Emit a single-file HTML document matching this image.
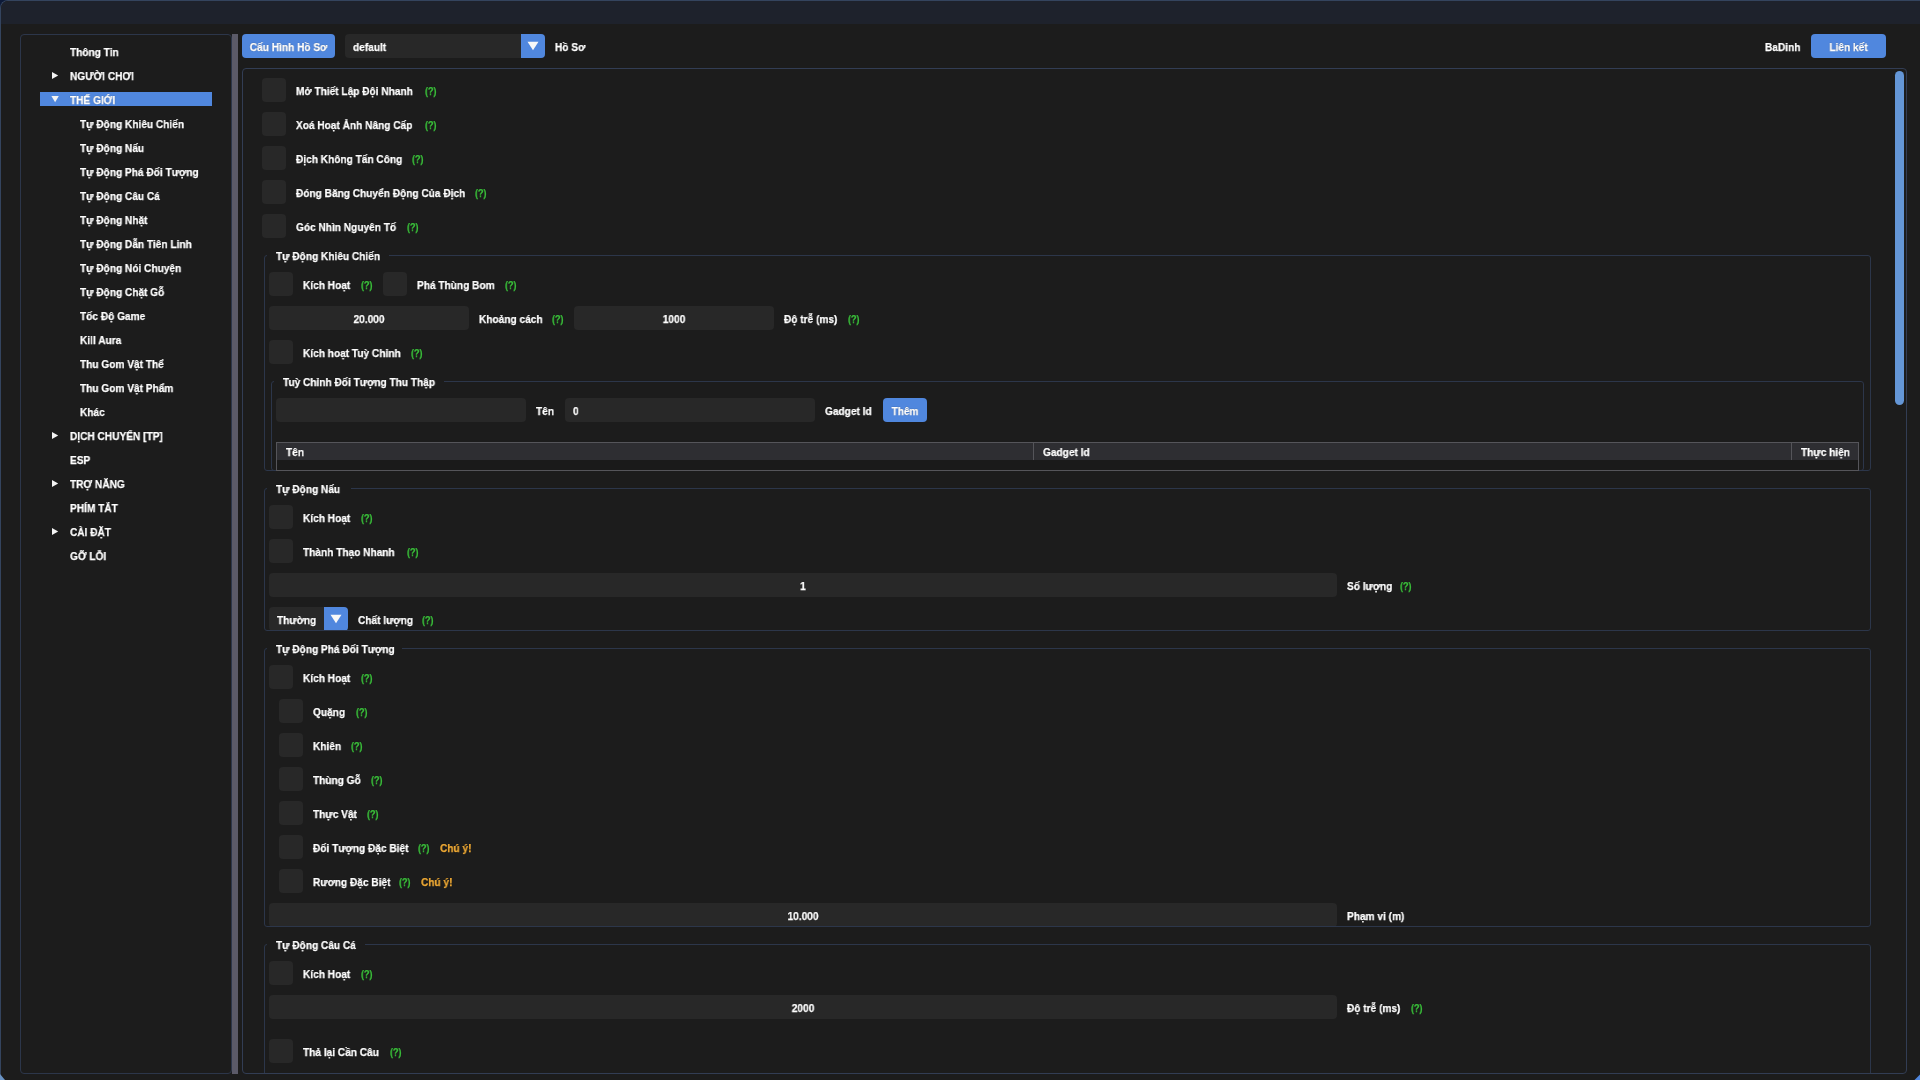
<!DOCTYPE html><html><head><meta charset="utf-8"><style>
html,body{margin:0;padding:0;background:#0d1a38;width:1920px;height:1080px;overflow:hidden}
.r{position:absolute}
.t{position:absolute;font-family:"Liberation Sans",sans-serif;font-weight:bold;font-size:11.5px;line-height:11.5px;color:#ffffff;white-space:nowrap;transform-origin:0 0;transform:scaleX(0.88);will-change:transform;-webkit-text-stroke-width:0.25px;text-shadow:0 0 1px rgba(0,0,0,.7)}
.t.c{text-align:center;transform-origin:50% 0}
.q{color:#3cc23c;transform:scaleX(.78)}
.w{color:#f2ac36}
.z5{z-index:6}
</style></head><body>
<div class="r" style="left:0px;top:0px;width:1920px;height:1080px;background:#1c1c1c;border-top-left-radius:8px;border-top:1px solid #34445e;border-left:1px solid #34445e;box-sizing:border-box"></div>
<div class="r" style="left:1px;top:1px;width:1919px;height:23px;background:#1e222c;border-top-left-radius:7px"></div>
<div class="r" style="left:20px;top:34px;width:212px;height:1040px;border:1px solid #2c364a;border-radius:4px;box-sizing:border-box"></div>
<div class="r" style="left:232px;top:34px;width:6px;height:1040px;background:#5b5a68"></div>
<div class="r" style="left:40px;top:92px;width:172px;height:14px;background:#5087de"></div>
<div class="t " style="left:70px;top:47.20px">Thông Tin</div>
<svg class="r" style="left:51px;top:70.5px" width="8" height="9"><path d="M1 1 L7.2 4.5 L1 8Z" fill="#f4f4f4"/></svg>
<div class="t " style="left:70px;top:71.20px">NGƯỜI CHƠI</div>
<svg class="r" style="left:51px;top:95px" width="9" height="8"><path d="M0.4 1 L7.8 1 L4.1 7.2Z" fill="#f4f4f4"/></svg>
<div class="t " style="left:70px;top:95.20px">THẾ GIỚI</div>
<div class="t " style="left:80px;top:119.20px">Tự Động Khiêu Chiến</div>
<div class="t " style="left:80px;top:143.20px">Tự Động Nấu</div>
<div class="t " style="left:80px;top:167.20px">Tự Động Phá Đối Tượng</div>
<div class="t " style="left:80px;top:191.20px">Tự Động Câu Cá</div>
<div class="t " style="left:80px;top:215.20px">Tự Động Nhặt</div>
<div class="t " style="left:80px;top:239.20px">Tự Động Dẫn Tiên Linh</div>
<div class="t " style="left:80px;top:263.20px">Tự Động Nói Chuyện</div>
<div class="t " style="left:80px;top:287.20px">Tự Động Chặt Gỗ</div>
<div class="t " style="left:80px;top:311.20px">Tốc Độ Game</div>
<div class="t " style="left:80px;top:335.20px">Kill Aura</div>
<div class="t " style="left:80px;top:359.20px">Thu Gom Vật Thể</div>
<div class="t " style="left:80px;top:383.20px">Thu Gom Vật Phẩm</div>
<div class="t " style="left:80px;top:407.20px">Khác</div>
<svg class="r" style="left:51px;top:430.5px" width="8" height="9"><path d="M1 1 L7.2 4.5 L1 8Z" fill="#f4f4f4"/></svg>
<div class="t " style="left:70px;top:431.20px">DỊCH CHUYỂN [TP]</div>
<div class="t " style="left:70px;top:455.20px">ESP</div>
<svg class="r" style="left:51px;top:478.5px" width="8" height="9"><path d="M1 1 L7.2 4.5 L1 8Z" fill="#f4f4f4"/></svg>
<div class="t " style="left:70px;top:479.20px">TRỢ NĂNG</div>
<div class="t " style="left:70px;top:503.20px">PHÍM TẮT</div>
<svg class="r" style="left:51px;top:526.5px" width="8" height="9"><path d="M1 1 L7.2 4.5 L1 8Z" fill="#f4f4f4"/></svg>
<div class="t " style="left:70px;top:527.20px">CÀI ĐẶT</div>
<div class="t " style="left:70px;top:551.20px">GỠ LỖI</div>
<div class="r" style="left:242px;top:34px;width:93px;height:24px;background:#5087de;border-radius:4px"></div>
<div class="t c " style="left:242px;width:93px;top:42.20px">Cấu Hình Hồ Sơ</div>
<div class="r" style="left:345px;top:34px;width:200px;height:24px;background:#282828;border-radius:4px"></div>
<div class="r" style="left:521px;top:34px;width:24px;height:24px;background:#5087de;border-radius:0 4px 4px 0"></div>
<svg class="r" style="left:527px;top:41px" width="12" height="10"><path d="M0.5 0.8 L11.5 0.8 L6 9.3Z" fill="#f8f8f8"/></svg>
<div class="t " style="left:353px;top:42.20px">default</div>
<div class="t " style="left:555px;top:42.20px">Hồ Sơ</div>
<div class="t " style="left:1765px;top:42.20px">BaDinh</div>
<div class="r" style="left:1811px;top:34px;width:75px;height:24px;background:#5087de;border-radius:4px"></div>
<div class="t c " style="left:1811px;width:75px;top:42.20px">Liên kết</div>
<div class="r" style="left:242px;top:68px;width:1665px;height:1006px;border:1px solid #323d54;border-radius:4px;box-sizing:border-box"></div>
<div class="r" style="left:243px;top:69px;width:1663px;height:1004px;overflow:hidden"><div class="r" style="left:-243px;top:-69px;width:1920px;height:1080px">
<div class="r" style="left:262px;top:78px;width:24px;height:24px;background:#282828;border-radius:4px"></div>
<div class="t " style="left:296px;top:86.20px">Mở Thiết Lập Đội Nhanh</div>
<div class="t q" style="left:425px;top:86.20px">(?)</div>
<div class="r" style="left:262px;top:112px;width:24px;height:24px;background:#282828;border-radius:4px"></div>
<div class="t " style="left:296px;top:120.20px">Xoá Hoạt Ảnh Nâng Cấp</div>
<div class="t q" style="left:425px;top:120.20px">(?)</div>
<div class="r" style="left:262px;top:146px;width:24px;height:24px;background:#282828;border-radius:4px"></div>
<div class="t " style="left:296px;top:154.20px">Địch Không Tấn Công</div>
<div class="t q" style="left:412px;top:154.20px">(?)</div>
<div class="r" style="left:262px;top:180px;width:24px;height:24px;background:#282828;border-radius:4px"></div>
<div class="t " style="left:296px;top:188.20px">Đóng Băng Chuyển Động Của Địch</div>
<div class="t q" style="left:475px;top:188.20px">(?)</div>
<div class="r" style="left:262px;top:214px;width:24px;height:24px;background:#282828;border-radius:4px"></div>
<div class="t " style="left:296px;top:222.20px">Góc Nhìn Nguyên Tố</div>
<div class="t q" style="left:407px;top:222.20px">(?)</div>
<div class="r" style="left:264px;top:255px;width:1607px;height:216px;border:1px solid #2c364a;border-radius:3px;box-sizing:border-box;z-index:2"></div>
<div class="r" style="left:267px;top:254px;width:122px;height:3px;background:#1c1c1c;z-index:3"></div>
<div class="t" style="left:276px;top:251.20px;z-index:4">Tự Động Khiêu Chiến</div>
<div class="r" style="left:269px;top:272px;width:24px;height:24px;background:#282828;border-radius:4px"></div>
<div class="t " style="left:303px;top:280.20px">Kích Hoạt</div>
<div class="t q" style="left:361px;top:280.20px">(?)</div>
<div class="r" style="left:383px;top:272px;width:24px;height:24px;background:#282828;border-radius:4px"></div>
<div class="t " style="left:417px;top:280.20px">Phá Thùng Bom</div>
<div class="t q" style="left:505px;top:280.20px">(?)</div>
<div class="r" style="left:269px;top:306px;width:200px;height:24px;background:#282828;border-radius:4px"></div>
<div class="t c " style="left:269px;width:200px;top:314.20px">20.000</div>
<div class="t " style="left:479px;top:314.20px">Khoảng cách</div>
<div class="t q" style="left:552px;top:314.20px">(?)</div>
<div class="r" style="left:574px;top:306px;width:200px;height:24px;background:#282828;border-radius:4px"></div>
<div class="t c " style="left:574px;width:200px;top:314.20px">1000</div>
<div class="t " style="left:784px;top:314.20px">Độ trễ (ms)</div>
<div class="t q" style="left:848px;top:314.20px">(?)</div>
<div class="r" style="left:269px;top:340px;width:24px;height:24px;background:#282828;border-radius:4px"></div>
<div class="t " style="left:303px;top:348.20px">Kích hoạt Tuỳ Chỉnh</div>
<div class="t q" style="left:411px;top:348.20px">(?)</div>
<div class="r" style="left:271px;top:381px;width:1593px;height:90px;border:1px solid #2c364a;border-radius:3px;box-sizing:border-box;z-index:2"></div>
<div class="r" style="left:274px;top:380px;width:170px;height:3px;background:#1c1c1c;z-index:3"></div>
<div class="t" style="left:283px;top:377.20px;z-index:4">Tuỳ Chỉnh Đối Tượng Thu Thập</div>
<div class="r" style="left:276px;top:398px;width:250px;height:24px;background:#282828;border-radius:4px"></div>
<div class="t " style="left:536px;top:406.20px">Tên</div>
<div class="r" style="left:565px;top:398px;width:250px;height:24px;background:#282828;border-radius:4px"></div>
<div class="t " style="left:573px;top:406.20px">0</div>
<div class="t " style="left:825px;top:406.20px">Gadget Id</div>
<div class="r" style="left:883px;top:398px;width:44px;height:24px;background:#5087de;border-radius:4px"></div>
<div class="t c " style="left:883px;width:44px;top:406.20px">Thêm</div>
<div class="r" style="left:276px;top:442px;width:1583px;height:29px;border:1px solid #55555a;box-sizing:border-box;background:#1a1a1a;z-index:5"></div>
<div class="r" style="left:277px;top:443px;width:1581px;height:17px;background:#2e2e32;z-index:5"></div>
<div class="r" style="left:1033px;top:443px;width:1px;height:17px;background:#55555a;z-index:5"></div>
<div class="r" style="left:1791px;top:443px;width:1px;height:17px;background:#55555a;z-index:5"></div>
<div class="t z5" style="left:286px;top:447.20px">Tên</div>
<div class="t z5" style="left:1043px;top:447.20px">Gadget Id</div>
<div class="t z5" style="left:1801px;top:447.20px">Thực hiện</div>
<div class="r" style="left:264px;top:488px;width:1607px;height:143px;border:1px solid #2c364a;border-radius:3px;box-sizing:border-box;z-index:2"></div>
<div class="r" style="left:267px;top:487px;width:84px;height:3px;background:#1c1c1c;z-index:3"></div>
<div class="t" style="left:276px;top:484.20px;z-index:4">Tự Động Nấu</div>
<div class="r" style="left:269px;top:505px;width:24px;height:24px;background:#282828;border-radius:4px"></div>
<div class="t " style="left:303px;top:513.20px">Kích Hoạt</div>
<div class="t q" style="left:361px;top:513.20px">(?)</div>
<div class="r" style="left:269px;top:539px;width:24px;height:24px;background:#282828;border-radius:4px"></div>
<div class="t " style="left:303px;top:547.20px">Thành Thạo Nhanh</div>
<div class="t q" style="left:407px;top:547.20px">(?)</div>
<div class="r" style="left:269px;top:573px;width:1068px;height:24px;background:#282828;border-radius:4px"></div>
<div class="t c " style="left:269px;width:1068px;top:581.20px">1</div>
<div class="t " style="left:1347px;top:581.20px">Số lượng</div>
<div class="t q" style="left:1400px;top:581.20px">(?)</div>
<div class="r" style="left:269px;top:607px;width:79px;height:24px;background:#282828;border-radius:4px"></div>
<div class="r" style="left:324px;top:607px;width:24px;height:24px;background:#5087de;border-radius:0 4px 4px 0"></div>
<svg class="r" style="left:330px;top:614px" width="12" height="10"><path d="M0.5 0.8 L11.5 0.8 L6 9.3Z" fill="#f8f8f8"/></svg>
<div class="t " style="left:277px;top:615.20px">Thường</div>
<div class="t " style="left:358px;top:615.20px">Chất lượng</div>
<div class="t q" style="left:422px;top:615.20px">(?)</div>
<div class="r" style="left:264px;top:648px;width:1607px;height:279px;border:1px solid #2c364a;border-radius:3px;box-sizing:border-box;z-index:2"></div>
<div class="r" style="left:267px;top:647px;width:135px;height:3px;background:#1c1c1c;z-index:3"></div>
<div class="t" style="left:276px;top:644.20px;z-index:4">Tự Động Phá Đối Tượng</div>
<div class="r" style="left:269px;top:665px;width:24px;height:24px;background:#282828;border-radius:4px"></div>
<div class="t " style="left:303px;top:673.20px">Kích Hoạt</div>
<div class="t q" style="left:361px;top:673.20px">(?)</div>
<div class="r" style="left:279px;top:699px;width:24px;height:24px;background:#282828;border-radius:4px"></div>
<div class="t " style="left:313px;top:707.20px">Quặng</div>
<div class="t q" style="left:356px;top:707.20px">(?)</div>
<div class="r" style="left:279px;top:733px;width:24px;height:24px;background:#282828;border-radius:4px"></div>
<div class="t " style="left:313px;top:741.20px">Khiên</div>
<div class="t q" style="left:351px;top:741.20px">(?)</div>
<div class="r" style="left:279px;top:767px;width:24px;height:24px;background:#282828;border-radius:4px"></div>
<div class="t " style="left:313px;top:775.20px">Thùng Gỗ</div>
<div class="t q" style="left:371px;top:775.20px">(?)</div>
<div class="r" style="left:279px;top:801px;width:24px;height:24px;background:#282828;border-radius:4px"></div>
<div class="t " style="left:313px;top:809.20px">Thực Vật</div>
<div class="t q" style="left:367px;top:809.20px">(?)</div>
<div class="r" style="left:279px;top:835px;width:24px;height:24px;background:#282828;border-radius:4px"></div>
<div class="t " style="left:313px;top:843.20px">Đối Tượng Đặc Biệt</div>
<div class="t q" style="left:418px;top:843.20px">(?)</div>
<div class="t w" style="left:440px;top:843.20px">Chú ý!</div>
<div class="r" style="left:279px;top:869px;width:24px;height:24px;background:#282828;border-radius:4px"></div>
<div class="t " style="left:313px;top:877.20px">Rương Đặc Biệt</div>
<div class="t q" style="left:399px;top:877.20px">(?)</div>
<div class="t w" style="left:421px;top:877.20px">Chú ý!</div>
<div class="r" style="left:269px;top:903px;width:1068px;height:24px;background:#282828;border-radius:4px"></div>
<div class="t c " style="left:269px;width:1068px;top:911.20px">10.000</div>
<div class="t " style="left:1347px;top:911.20px">Phạm vi (m)</div>
<div class="r" style="left:264px;top:944px;width:1607px;height:257px;border:1px solid #2c364a;border-radius:3px;box-sizing:border-box;z-index:2"></div>
<div class="r" style="left:267px;top:943px;width:98px;height:3px;background:#1c1c1c;z-index:3"></div>
<div class="t" style="left:276px;top:940.20px;z-index:4">Tự Động Câu Cá</div>
<div class="r" style="left:269px;top:961px;width:24px;height:24px;background:#282828;border-radius:4px"></div>
<div class="t " style="left:303px;top:969.20px">Kích Hoạt</div>
<div class="t q" style="left:361px;top:969.20px">(?)</div>
<div class="r" style="left:269px;top:995px;width:1068px;height:24px;background:#282828;border-radius:4px"></div>
<div class="t c " style="left:269px;width:1068px;top:1003.20px">2000</div>
<div class="t " style="left:1347px;top:1003.20px">Độ trễ (ms)</div>
<div class="t q" style="left:1411px;top:1003.20px">(?)</div>
<div class="r" style="left:269px;top:1039px;width:24px;height:24px;background:#282828;border-radius:4px"></div>
<div class="t " style="left:303px;top:1047.20px">Thả lại Cần Câu</div>
<div class="t q" style="left:390px;top:1047.20px">(?)</div>
</div></div>
<div class="r" style="left:1895px;top:71px;width:9px;height:334px;background:#6496d6;border-radius:5px"></div>
<svg class="r" style="left:0px;top:1072px" width="8" height="8"><path d="M0 2 L0 8 L5 8Z" fill="#6a93c4"/></svg>
<svg class="r" style="left:1900px;top:1060px" width="20" height="20"><path d="M20 14.5 L20 20 L14.5 20Z" fill="#5087de"/></svg>
</body></html>
